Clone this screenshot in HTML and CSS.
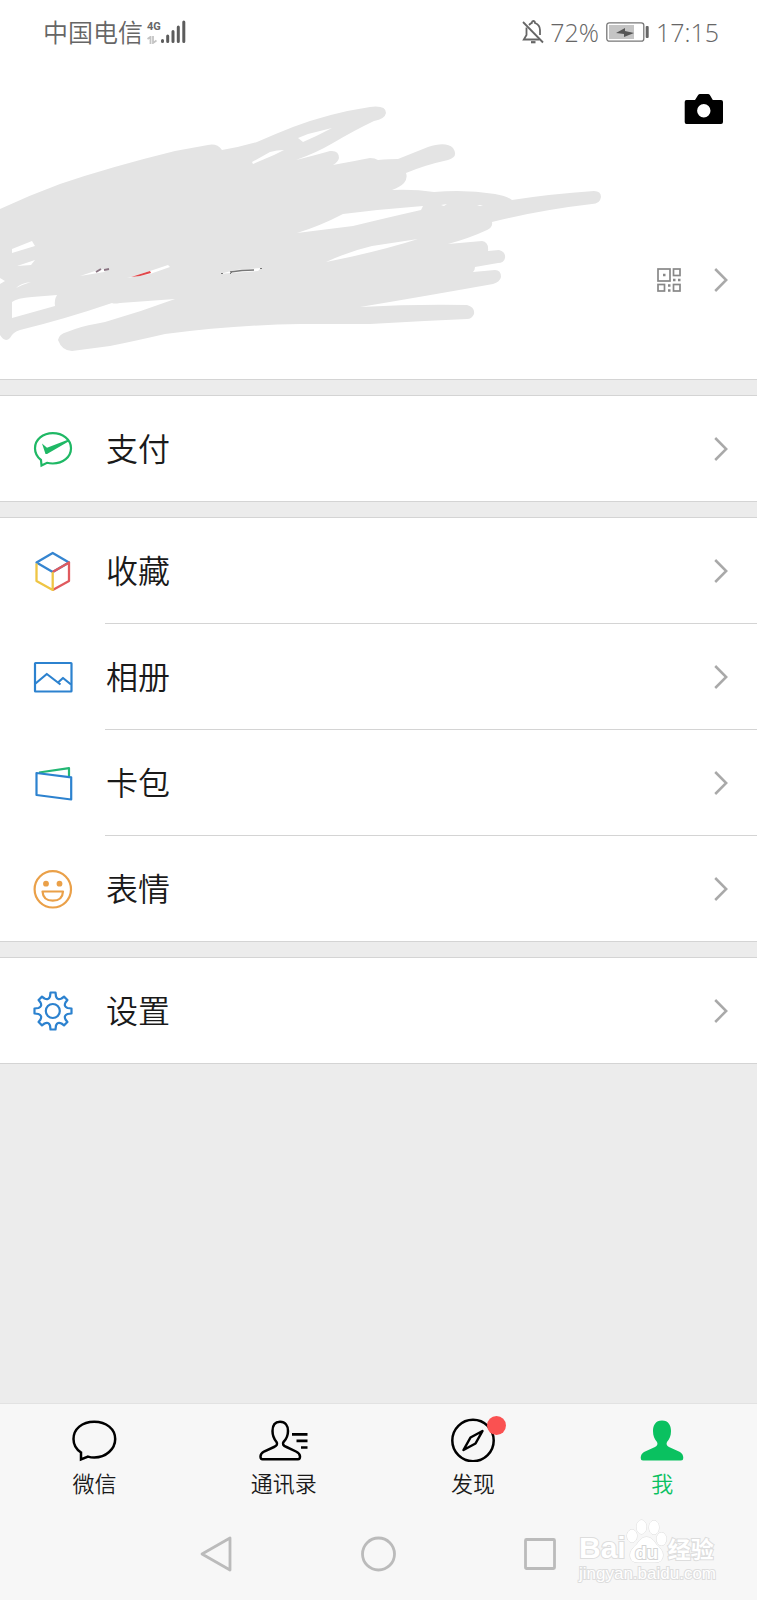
FILE: index.html
```html
<!doctype html>
<html lang="zh-CN">
  <head>
    <meta charset="utf-8"/>
    <meta name="viewport" content="width=device-width, initial-scale=1.0">
    <title>我</title>
    <link rel="stylesheet" href="styles.css">
  </head>
  <body>
    <!-- shared arrow, used at the end of every row -->
    <svg class="defs" width="0" height="0" aria-hidden="true">
      <symbol id="arrow" viewBox="0 0 14 24">
        <path d="M1.2 1L12.2 12L1.2 23" fill="none" stroke="#a9a9a9" stroke-width="2.5"/>
      </symbol>
    </svg>

    <div class="status">
      <div class="status-side">
        <span class="carrier">中国电信</span>
        <span class="network">
          <span class="network-type">4G</span>
          <svg width="10" height="8" viewBox="0 0 10 8" fill="none" stroke="#c4c4c4" stroke-width="1.8"><path d="M0.5 3L3.5 0.8V8M6 0V7L9.5 4.5"/></svg>
        </span>
        <svg width="25" height="24" viewBox="0 0 25 24" fill="none" stroke="#5c5c5c" stroke-width="3" stroke-linecap="round">
          <path d="M1.5 20.5V21.5M6.7 16V21.5M12 11.5V21.5M17.3 7V21.5M22.8 2V21.5"/>
        </svg>
      </div>
      <div class="status-side">
        <svg width="23" height="25" viewBox="0 0 23 25" fill="none" stroke="#666" stroke-width="1.8">
          <path d="M1 2L21 22.5"/>
          <path d="M4.5 7.5V15L1.8 19.5H17.5M7 5Q9 3 9.7 3Q10 1 11.3 1Q12.8 1 13 3Q18 5 18 10V15"/>
          <path d="M9 22.2H13.5" stroke-width="2.2"/>
        </svg>
        <span class="percent">72%</span>
        <svg class="battery" width="43" height="20" viewBox="0 0 43 20">
          <rect x="0.8" y="0.8" width="37" height="18.4" rx="2.5" fill="none" stroke="#777" stroke-width="1.3"/>
          <rect x="3" y="3" width="25" height="14" fill="#c4c4c4"/>
          <path d="M10 11L19 6V9L28 11L18 15V12Z" fill="#555"/>
          <rect x="39.7" y="4" width="3" height="12" rx="1" fill="#666"/>
        </svg>
        <span>17:15</span>
      </div>
    </div>

    <header class="profile">
      <svg class="scribble" viewBox="0 64 610 315" aria-hidden="true">
        <path fill="#e4e4e4" d="M0 209Q30 195 60 184Q110 167 175 151L208 145Q217 143 222 150Q240 147 257 142Q275 134 293 127Q330 113 370 107Q386 105 386 113Q385 119 374 121Q355 130 333 143Q316 153 296 160Q316 155 330 151Q339 150 339 158Q338 162 333 165Q355 161 370 158Q375 158 378 160Q390 159 398 159L428 147Q446 141 453 148Q459 157 448 160Q425 165 406 173Q408 178 404 183Q400 187 392 190Q414 189 434 192Q465 189 495 194Q507 196 512 200Q550 194 594 191Q601 191 601 197Q600 204 592 204Q540 210 492 222Q493 227 487 230Q470 238 448 244L482 241Q489 242 488 251L499 250Q506 252 505 258Q504 263 498 263L475 267Q475 270 473 272L495 270Q501 270 501 277Q500 282 493 284Q420 297 360 307Q415 304 467 305Q475 307 474 314Q472 319 467 319Q420 321 370 324H300Q235 325 165 334Q135 341 110 346L72 351Q62 351 58 340Q59 334 67 332Q82 326 95 324L105 322Q140 312 175 299L120 303Q114 304 112 303Q65 319 20 330Q13 332 10 338Q5 343 0 335Z"/>
        <g fill="#fff">
          <path d="M252 162L270 152Q277 150 284 150L274 155L253 164Z"/>
          <path d="M298 138L308 134L332 128Q317 136 303 142Z"/>
          <path d="M297 233Q320 226 343 214Q383 209 423 206L421 210Q390 217 353 226Z"/>
          <path d="M326 262Q350 251 372 246L418 239Q390 248 350 257Z"/>
          <path d="M441 205L447 204L444 206ZM477 205L483 205L480 206Z"/>
          <path d="M12 249L32 241L35 246L12 253ZM17 266L35 260L31 265ZM0 278L5 281L0 284ZM16 288Q21 283 31 282Q24 284 16 288Z"/>
          <path d="M12 302Q17 298 32 297L57 295Q54 300 55 306L12 318Z"/>
          <path d="M80 276L98 270L109 268L104 272Q92 274 80 276ZM127 278L150 271L168 265L170 267L150 274ZM220 274L235 270L261 268L258 271L230 273Z"/>
        </g>
        <path d="M96 272L101 269M104 270L109 269" fill="none" stroke="#8a7482" stroke-width="2"/>
        <path d="M131 277L150 271L151 273L140 276Z" fill="#e0474a"/>
        <path d="M230 272Q242 270 254 270" fill="none" stroke="#777" stroke-width="1.4"/>
        <path d="M221 273.5H223M230 274L232 272M260 268.5H262" fill="none" stroke="#777"/>
      </svg>
      <div class="profile-side">
        <button class="camera" type="button" aria-label="相机">
          <svg width="40" height="32" viewBox="0 0 40 32">
            <path fill-rule="evenodd" d="M2.5 7H11L14 2.2Q14.8 1 16 1H24Q25.3 1 26 2.2L28.8 7H37Q39 7 39 9V29Q39 31 37 31H2.5Q0.7 31 0.7 29V9Q0.7 7 2.5 7ZM19.8 11A6.7 6.7 0 1 0 19.8 24.4A6.7 6.7 0 1 0 19.8 11Z"/>
          </svg>
        </button>
        <a class="qr" href="#profile" aria-label="我的二维码">
          <svg width="24" height="24" viewBox="0 0 24 24" fill="none" stroke="#888" stroke-width="1.7">
            <rect x="1" y="1" width="12" height="12"/>
            <rect x="16.5" y="1" width="6.500" height="6.5"/>
            <rect x="1" y="16.5" width="6.500" height="6.5"/>
            <rect x="16.5" y="16.5" width="6.5" height="6.5"/>
            <path d="M6 7H8.500M16 12H18.5M21 12H23.5M11 17.5H13.5M11 22.5H13.5" stroke-width="2.5"/>
          </svg>
          <svg width="14" height="24"><use href="#arrow"/></svg>
        </a>
      </div>
    </header>

    <main>
      <ul class="group">
        <li>
          <a href="#pay">
            <svg class="icon" viewBox="0 0 40 40">
              <path d="M8 31Q2 26.5 2 19.3C2 10.5 10 4.2 19.8 4.2S38 10.5 38 19.3S30 34.5 19.8 34.5Q16.5 34.5 14 33.8L8.5 36.5Z" fill="none" stroke="#1fb865" stroke-width="2.2"/>
              <path d="M9 14.5L14 18.8L35.5 10.5L35.5 12.5L14 25L12.5 25Z" fill="#1fb865"/>
            </svg>
            <span>支付</span>
            <svg class="arrow"><use href="#arrow"/></svg>
          </a>
        </li>
      </ul>

      <ul class="group">
        <li>
          <a href="#favorites">
            <svg class="icon" viewBox="0 0 40 40" fill="none" stroke-width="2.3" stroke-linejoin="round">
              <path d="M3.5 11.5L19.7 2L36 11.5L19.7 21Z" stroke="#3585d0"/>
              <path d="M19.7 39L36 30V11.5L19.7 21" stroke="#e05a5e"/>
              <path d="M19.7 21V39L3.5 30V12.5" stroke="#efc544"/>
            </svg>
            <span>收藏</span>
            <svg class="arrow"><use href="#arrow"/></svg>
          </a>
        </li>
        <li>
          <a href="#album">
            <svg class="icon" viewBox="0 0 40 40" fill="none" stroke="#2c82cf" stroke-width="2.2" stroke-linejoin="round">
              <rect x="2" y="6" width="36.5" height="28.5" rx="0.5"/>
              <path d="M2.5 26.5L13.8 17L27.5 27.5M25 25.5L30 21L38 27.5"/>
            </svg>
            <span>相册</span>
            <svg class="arrow"><use href="#arrow"/></svg>
          </a>
        </li>
        <li>
          <a href="#cards">
            <svg class="icon" viewBox="0 0 40 40" fill="none" stroke-width="2.2" stroke-linejoin="round">
              <path d="M6 9.500L36 5.2V13.5" stroke="#23b774"/>
              <path d="M3.5 10L38.2 14.3V36.5L3.5 32Z" stroke="#2c82cf"/>
            </svg>
            <span>卡包</span>
            <svg class="arrow"><use href="#arrow"/></svg>
          </a>
        </li>
        <li>
          <a href="#stickers">
            <svg class="icon" viewBox="0 0 40 40" fill="none" stroke="#eaa048" stroke-width="2.2">
              <circle cx="19.8" cy="20.3" r="18.2"/>
              <circle cx="13" cy="14.7" r="2.9" fill="#eaa048" stroke="none"/>
              <circle cx="26.5" cy="14.7" r="2.9" fill="#eaa048" stroke="none"/>
              <path d="M9.500 22.5H30Q29.5 31.7 19.8 31.7T9.5 22.5Z" stroke-linejoin="round"/>
            </svg>
            <span>表情</span>
            <svg class="arrow"><use href="#arrow"/></svg>
          </a>
        </li>
      </ul>

      <ul class="group">
        <li>
          <a href="#settings">
            <svg class="icon" viewBox="0 0 40 40" fill="none" stroke="#2c82cf" stroke-width="2.2" stroke-linejoin="round">
              <circle cx="19.8" cy="20" r="7"/>
              <path d="M17.5 1.5H22.5L23 5.5Q24.5 9.5 28.5 7.5L31 5.6L34.4 9L32.5 11.5Q30.500 15.5 34.5 17L38.5 17.5V22.5L34.5 23Q30.5 24.5 32.5 28.5L34.4 31L31 34.4L28.5 32.5Q24.5 30.5 23 34.5L22.5 38.5H17.5L17 34.5Q15.5 30.5 11.5 32.5L9 34.4L5.6 31L7.5 28.5Q9.5 24.5 5.5 23L1.5 22.5V17.5L5.5 17Q9.5 15.5 7.5 11.5L5.6 9L9 5.6L11.5 7.5Q15.5 9.5 17 5.5Z"/>
            </svg>
            <span>设置</span>
            <svg class="arrow"><use href="#arrow"/></svg>
          </a>
        </li>
      </ul>
    </main>

    <footer>
      <nav class="tabs">
        <a href="#chats">
          <svg class="tab-icon" viewBox="0 0 52 46" fill="none" stroke="#000" stroke-width="2.5">
            <path d="M12 36.500Q4.500 31.5 4.5 23C4.5 13 13 5.7 25.2 5.7S46.2 13 46.2 23S37 41.500 25.2 41.500Q22 41.5 19 40.600L12 43.5Z"/>
          </svg>
          <span>微信</span>
        </a>
        <a href="#contacts">
          <svg class="tab-icon" viewBox="0 0 52 46" fill="none" stroke="#000" stroke-width="2.5">
            <path d="M22 5.7C16.5 5.700 14.5 10 14.5 15C14.5 20 16 23 18.5 26Q20.5 29 16 31L6 35.5Q2.5 37.5 2.5 40.5Q2.5 43.3 4.5 43.3H40Q42 43.3 42 40.5Q42 37.5 38 35.5L28.5 31Q23.5 29 25.5 26C28.5 23 30 20 30 15C30 10 27.5 5.7 22 5.7Z"/>
            <path d="M34 18.3H49.5M38.5 24.8H49.5M43 31.5H49.5" stroke-width="2.7"/>
          </svg>
          <span>通讯录</span>
        </a>
        <a href="#discover">
          <svg class="tab-icon" viewBox="0 0 52 46" fill="none" stroke="#000" stroke-width="2.5">
            <circle cx="26" cy="24.5" r="20.7"/>
            <path d="M35.5 15L23.5 21.5L16.5 34L28.5 27.5Z" stroke-linejoin="round"/>
          </svg>
          <i class="dot"></i>
          <span>发现</span>
        </a>
        <a class="active" href="#me" aria-current="page">
          <svg class="tab-icon" viewBox="0 0 52 46" fill="#0ac160">
            <path d="M26 4.5C19.5 4.5 17 9.5 17 15C17 20 18.5 23 21 26Q22.5 29 19 31L8 36Q4.7 38 4.7 42Q4.7 44.5 7 44.5H45Q47.3 44.5 47.3 42Q47.3 38 44 36L33 31Q29.5 29 31 26C33.5 23 35 20 35 15C35 9.5 32.5 4.5 26 4.5Z"/>
          </svg>
          <span>我</span>
        </a>
      </nav>

      <div class="system">
        <button type="button" aria-label="返回"><svg viewBox="0 0 36 36"><path d="M31 2V34L3 18Z"/></svg></button>
        <button type="button" aria-label="主页"><svg viewBox="0 0 36 36"><circle cx="17.500" cy="18" r="16"/></svg></button>
        <button type="button" aria-label="最近任务"><svg viewBox="0 0 36 36"><rect x="2.5" y="3.5" width="29" height="29" rx="1"/></svg></button>
      </div>

      <div class="watermark">
        <div class="brand">
          <span class="brand-name">Bai</span>
          <svg width="42" height="46" viewBox="0 0 42 46">
            <g fill="#fff" stroke="#ddd">
              <ellipse cx="6" cy="18" rx="5" ry="6.5"/>
              <ellipse cx="15.5" cy="9" rx="5" ry="7"/>
              <ellipse cx="28" cy="9.5" rx="5" ry="7"/>
              <ellipse cx="35.5" cy="21" rx="5" ry="6.5"/>
              <path d="M20.5 19Q26 19 30 26Q37 32 37 37Q37 44.5 29 44.5H12Q4 44.5 4 37Q4 32 11 26Q15 19 20.5 19Z"/>
            </g>
            <text x="20.5" y="41" text-anchor="middle">du</text>
          </svg>
          <span class="brand-cn">经验</span>
        </div>
        <div class="site">jingyan.baidu.com</div>
      </div>
    </footer>
  </body>
</html>
```

FILE: styles.css
```css
* {
  box-sizing: border-box;
  margin: 0;
  padding: 0;
}

body {
  display: flex;
  flex-direction: column;
  min-height: 100vh;
  background: #ececec;
  color: #1a1a1a;
  font-family: "Noto Sans CJK SC", sans-serif;
  font-weight: 350;
}

a {
  color: inherit;
  text-decoration: none;
}

button {
  border: 0;
  background: none;
}

svg {
  display: block;
  flex-shrink: 0;
}

.defs {
  position: absolute;
}

/* status bar */

.status {
  display: flex;
  justify-content: space-between;
  align-items: center;
  height: 64px;
  padding: 0 38px 0 43px;
  background: #fff;
  color: #666;
  font-family: "Open Sans", "Noto Sans CJK SC", sans-serif;
  font-size: 25px;
  font-weight: 300;
  line-height: 32px;
}

.status-side {
  display: flex;
  align-items: center;
}

.carrier {
  padding-bottom: 2px;
  font-family: "Noto Sans CJK SC", sans-serif;
  font-weight: 350;
}

.network {
  display: flex;
  flex-direction: column;
  gap: 3px;
  margin-left: 4px;
}

.network-type {
  font-family: "Roboto", sans-serif;
  font-size: 11px;
  font-weight: 700;
  line-height: 12px;
}

.percent {
  margin-left: 5px;
}

.battery {
  margin: 0 7px;
}

/* profile */

.profile {
  display: flex;
  justify-content: space-between;
  background: #fff;
  border-bottom: 1px solid #d4d4d4;
}

.scribble {
  flex: 0 1 610px;
  min-width: 0;
}

.profile-side {
  display: flex;
  flex-direction: column;
  align-items: flex-end;
  padding: 29px 29px 0 0;
}

.camera {
  margin-right: 4px;
}

.qr {
  display: flex;
  gap: 33px;
  margin-top: 143px;
}

/* list */

main {
  flex: 1;
  padding-bottom: 15px;
}

.group {
  margin-top: 15px;
  background: #fff;
  border-top: 1px solid #d4d4d4;
  border-bottom: 1px solid #d4d4d4;
  list-style: none;
}

.group a {
  display: flex;
  align-items: center;
  height: 105px;
  padding: 0 29px 0 33px;
  font-size: 32px;
  line-height: 48px;
}

.group li + li::before {
  content: "";
  display: block;
  height: 1px;
  margin-left: 105px;
  background: #d4d4d4;
}

.group span {
  flex: 1;
  margin-left: 33px;
  padding-bottom: 3px;
}

.icon {
  width: 40px;
  height: 40px;
}

.arrow {
  width: 14px;
  height: 24px;
}

/* bottom */

footer {
  position: relative;
  height: 197px;
  background: #f7f7f7;
  border-top: 1px solid #e2e2e2;
}

.tabs {
  display: flex;
}

.tabs a {
  position: relative;
  display: flex;
  flex: 1;
  flex-direction: column;
  align-items: center;
  padding-top: 12px;
  font-size: 22px;
  line-height: 40px;
}

.tabs .active {
  color: #0ac160;
}

.tab-icon {
  width: 52px;
  height: 46px;
}

.dot {
  position: absolute;
  top: 12px;
  left: 50%;
  width: 19px;
  height: 19px;
  margin-left: 14px;
  border-radius: 50%;
  background: #fa5151;
}

.system {
  display: flex;
  justify-content: center;
  gap: 126px;
  margin-top: 34px;
}

.system svg {
  width: 36px;
  height: 36px;
  fill: none;
  stroke: #bbb;
  stroke-width: 2.8;
  stroke-linejoin: round;
}

.watermark {
  position: absolute;
  right: 41px;
  bottom: 16px;
  color: #fff;
  font-family: "Liberation Sans", "Noto Sans CJK SC", sans-serif;
  font-weight: 700;
  -webkit-text-stroke: 2px #ddd;
  paint-order: stroke fill;
}

.brand {
  display: flex;
  align-items: flex-end;
}

.brand-name {
  font-size: 30px;
  line-height: 32px;
}

.brand-cn {
  font-size: 23px;
  line-height: 28px;
}

.brand text {
  fill: #fff;
  stroke: #d4d4d4;
  stroke-width: 2px;
  font-size: 19px;
}

.site {
  font-size: 17px;
  font-weight: 400;
  line-height: 20px;
}
```
